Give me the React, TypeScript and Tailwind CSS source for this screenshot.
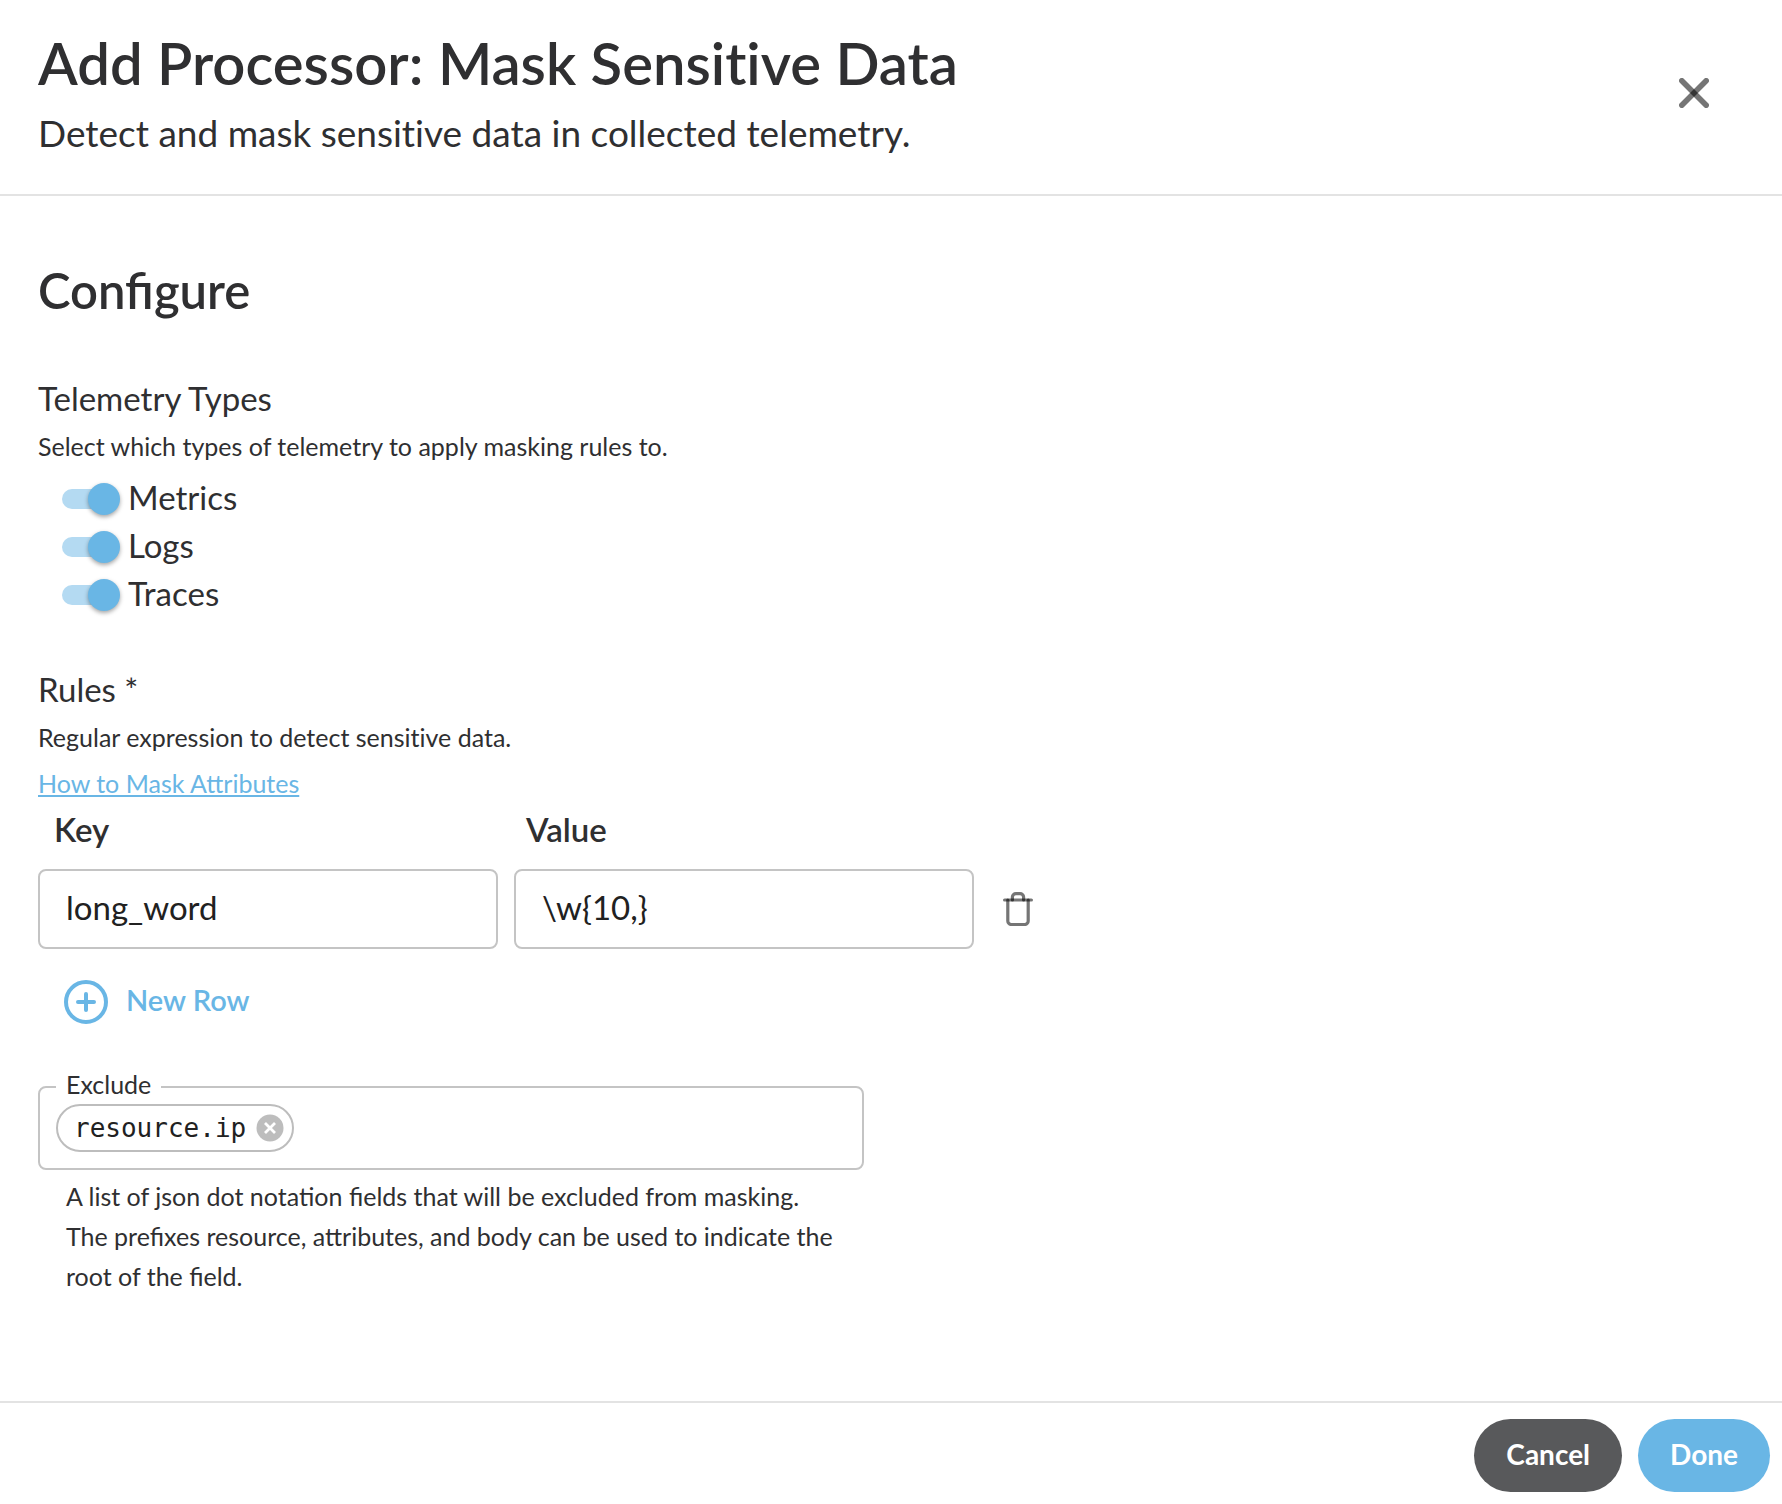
import { useState, KeyboardEvent } from "react";

type Rule = { key: string; value: string };

const TELEMETRY_TYPES = ["Metrics", "Logs", "Traces"];

const CloseIcon = () => (
  <svg width="30" height="30" viewBox="0 0 30 30" stroke="#000" strokeOpacity="0.54" strokeWidth="5.6" strokeLinecap="round">
    <line x1="2.8" y1="2.8" x2="27.2" y2="27.2" />
    <line x1="27.2" y1="2.8" x2="2.8" y2="27.2" />
  </svg>
);

const TrashIcon = () => (
  <svg width="30" height="34" viewBox="0 0 30 34" fill="none" stroke="#000" strokeOpacity="0.54" strokeWidth="3.2" strokeLinecap="round" strokeLinejoin="round">
    <path d="M4.8 8v21a3.5 3.5 0 0 0 3.5 3.5h13.4a3.5 3.5 0 0 0 3.5-3.5V8" />
    <path d="M9.4 8V5a3.5 3.5 0 0 1 3.5-3.4h4.2A3.5 3.5 0 0 1 20.600 5v3" />
    <path d="M1.600 8h26.800" />
  </svg>
);

const PlusCircleIcon = () => (
  <svg width="44" height="44" viewBox="0 0 44 44" fill="none" stroke="#69b6e5" strokeWidth="4" strokeLinecap="round">
    <circle cx="22" cy="22" r="20" />
    <path d="M22 14v16M14 22h16" />
  </svg>
);

const ChipDeleteIcon = () => (
  <svg width="28" height="28" viewBox="0 0 28 28">
    <circle cx="14" cy="14" r="13.500" fill="#bdbdbd" />
    <path d="M9 9l10 10M19 9L9 19" stroke="#fff" strokeWidth="2.800" />
  </svg>
);

const App = () => {
  const [enabled, setEnabled] = useState<string[]>(TELEMETRY_TYPES);
  const [rules, setRules] = useState<Rule[]>([
    { key: "long_word", value: "\\w{10,}" },
  ]);
  const [excludes, setExcludes] = useState<string[]>(["resource.ip"]);
  const [draft, setDraft] = useState("");

  const toggleType = (type: string) => {
    setEnabled((prev) =>
      prev.includes(type) ? prev.filter((t) => t !== type) : [...prev, type]
    );
  };

  const updateRule = (index: number, patch: Partial<Rule>) => {
    setRules((prev) => prev.map((r, i) => (i === index ? { ...r, ...patch } : r)));
  };

  // Enter turns the typed text into a chip
  const handleExcludeKey = (e: KeyboardEvent<HTMLInputElement>) => {
    if (e.key !== "Enter" || !draft.trim()) return;
    setExcludes((prev) => [...prev, draft.trim()]);
    setDraft("");
  };

  return (
    <div className="flex min-h-screen flex-col bg-white font-['Lato',sans-serif] text-[#2f2f31]">
      <header className="flex items-center justify-between border-b-2 border-[#e3e3e3] pt-[23px] pr-[73px] pb-[31px] pl-[38px] [font-variant-ligatures:none]">
        <div>
          <h1 className="text-[58px] leading-[80px] font-semibold">
            Add Processor: Mask Sensitive Data
          </h1>
          <h2 className="text-[37px] leading-[60px]">
            Detect and mask sensitive data in collected telemetry.
          </h2>
        </div>
        <button aria-label="Close" className="cursor-pointer">
          <CloseIcon />
        </button>
      </header>

      <main className="flex-1 px-[38px] pt-[58px] pb-16">
        <h2 className="text-[49px] leading-[72px] font-semibold">Configure</h2>

        {/* Telemetry types */}
        <section className="mt-12">
          <h3 className="text-[33px] leading-[48px]">Telemetry Types</h3>
          <p className="text-[25px] leading-[48px]">
            Select which types of telemetry to apply masking rules to.
          </p>
          <div className="mt-[5px] flex flex-col items-start pl-6">
            {TELEMETRY_TYPES.map((type) => (
              <label key={type} className="flex h-12 cursor-pointer items-center gap-[14px]">
                <input
                  type="checkbox"
                  role="switch"
                  checked={enabled.includes(type)}
                  onChange={() => toggleType(type)}
                  className="flex h-5 w-[52px] cursor-pointer appearance-none items-center justify-start rounded-full bg-[#9e9e9e] before:block before:size-8 before:shrink-0 before:rounded-full before:bg-white before:shadow-[0_2px_4px_rgba(0,0,0,0.35)] checked:justify-end checked:bg-[#b4daf2] checked:before:-mr-1.5 checked:before:bg-[#69b6e5]"
                />
                <span className="pb-1 text-[33px] leading-[44px]">{type}</span>
              </label>
            ))}
          </div>
        </section>

        {/* Masking rules */}
        <section className="mt-[46px]">
          <h3 className="text-[33px] leading-[48px]">Rules *</h3>
          <p className="text-[25px] leading-[48px] [font-variant-ligatures:none]">
            Regular expression to detect sensitive data.
          </p>
          <a
            href="#mask-attributes"
            className="block w-fit text-[25px] leading-[44px] text-[#69b6e5] underline decoration-2 underline-offset-2"
          >
            How to Mask Attributes
          </a>
          <div className="grid grid-cols-[460px_460px_auto] items-center justify-start gap-x-4">
            <label htmlFor="key-0" className="pl-4 text-[33px] leading-[48px] font-semibold">
              Key
            </label>
            <label htmlFor="value-0" className="col-span-2 pl-3 text-[33px] leading-[48px] font-semibold">
              Value
            </label>
          </div>
          <div className="mt-4 flex flex-col gap-4">
            {rules.map((rule, i) => (
              <div key={i} className="grid grid-cols-[460px_460px_auto] items-center justify-start gap-x-4">
                <input
                  id={`key-${i}`}
                  value={rule.key}
                  onChange={(e) => updateRule(i, { key: e.target.value })}
                  className="h-20 rounded-lg border-2 border-[#c4c4c4] px-[26px] pb-1 text-[33px] text-[#212121] outline-none focus:border-[#69b6e5]"
                />
                <input
                  id={`value-${i}`}
                  value={rule.value}
                  onChange={(e) => updateRule(i, { value: e.target.value })}
                  className="h-20 rounded-lg border-2 border-[#c4c4c4] px-[26px] pb-1 text-[33px] text-[#212121] outline-none focus:border-[#69b6e5]"
                />
                <button
                  aria-label="Remove row"
                  className="ml-[13px] cursor-pointer"
                  onClick={() => setRules((prev) => prev.filter((_, n) => n !== i))}
                >
                  <TrashIcon />
                </button>
              </div>
            ))}
          </div>
          <button
            className="mt-[31px] ml-[26px] flex cursor-pointer items-center gap-[18px] text-[29px] leading-[40px] font-semibold text-[#69b6e5]"
            onClick={() => setRules((prev) => [...prev, { key: "", value: "" }])}
          >
            <PlusCircleIcon />
            <span className="pb-1">New Row</span>
          </button>
        </section>

        {/* Excluded fields */}
        <section className="mt-[46px] w-[826px] max-w-full">
          <fieldset className="rounded-lg border-2 border-[#c4c4c4] px-4">
            <legend className="px-[10px] pb-1.5 text-[25px] leading-[28px]">
              <label htmlFor="exclude">Exclude</label>
            </legend>
            <div className="flex min-h-16 flex-wrap items-start gap-2">
              {excludes.map((field) => (
                <span
                  key={field}
                  className="flex h-12 items-center gap-[10px] rounded-full border-2 border-[#bdbdbd] pr-2 pl-4 font-['DejaVu_Sans_Mono',monospace] text-[26px] text-[#212121]"
                >
                  {field}
                  <button
                    aria-label={`Remove ${field}`}
                    className="cursor-pointer"
                    onClick={() => setExcludes((prev) => prev.filter((f) => f !== field))}
                  >
                    <ChipDeleteIcon />
                  </button>
                </span>
              ))}
              <input
                id="exclude"
                value={draft}
                onChange={(e) => setDraft(e.target.value)}
                onKeyDown={handleExcludeKey}
                className="h-12 min-w-0 flex-1 text-[26px] outline-none"
              />
            </div>
          </fieldset>
          <p className="mt-1.5 px-7 text-[25px] leading-10">
            A list of json dot notation fields that will be excluded from masking. The
            prefixes resource, attributes, and body can be used to indicate the root of the
            field.
          </p>
        </section>
      </main>

      <footer className="flex justify-end gap-4 border-t-2 border-[#e3e3e3] px-3 pt-4 pb-3">
        <button className="h-[73px] cursor-pointer rounded-full bg-[#58595b] px-8 pb-1 text-[28px] font-bold text-white">
          Cancel
        </button>
        <button className="h-[73px] cursor-pointer rounded-full bg-[#69b6e5] px-8 pb-1 text-[28px] font-bold text-white">
          Done
        </button>
      </footer>
    </div>
  );
};

export default App;
